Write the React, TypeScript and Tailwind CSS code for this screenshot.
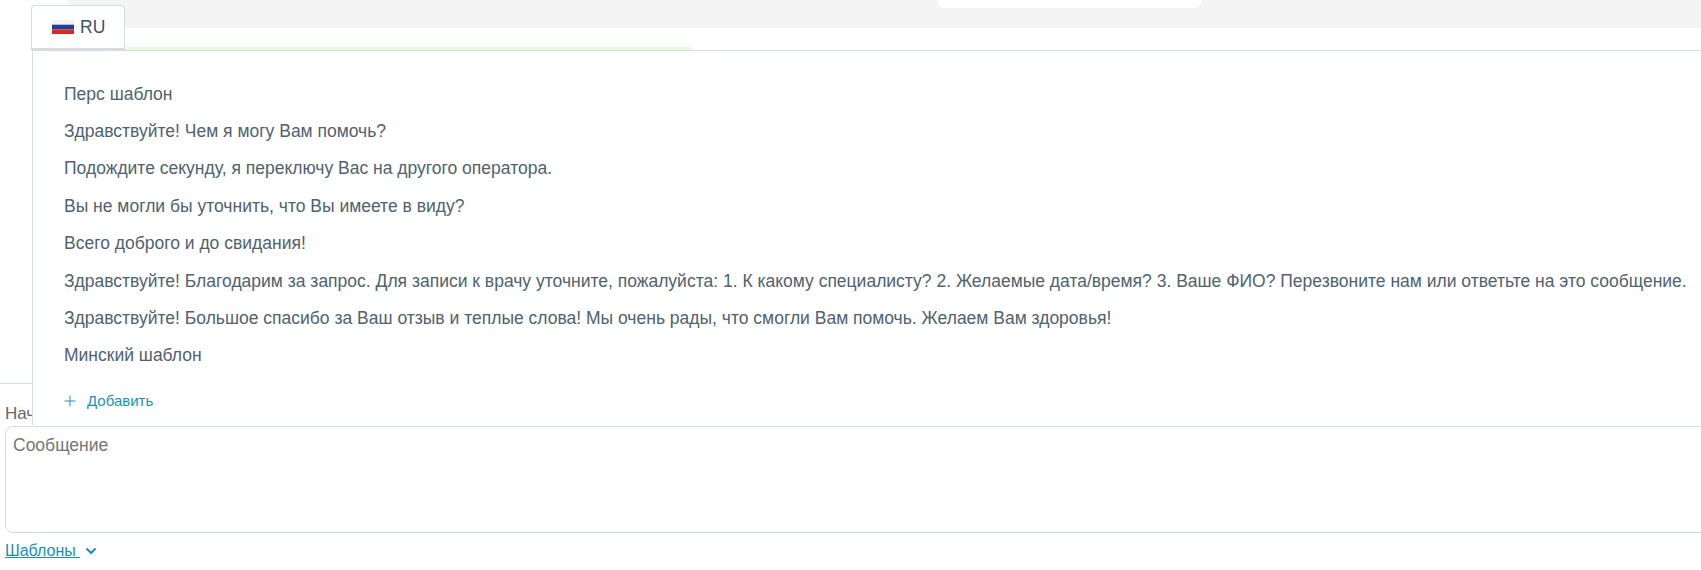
import React from "react";

const rows = [
  "Перс шаблон",
  "Здравствуйте! Чем я могу Вам помочь?",
  "Подождите секунду, я переключу Вас на другого оператора.",
  "Вы не могли бы уточнить, что Вы имеете в виду?",
  "Всего доброго и до свидания!",
  "Здравствуйте! Благодарим за запрос. Для записи к врачу уточните, пожалуйста: 1. К какому специалисту? 2. Желаемые дата/время? 3. Ваше ФИО? Перезвоните нам или ответьте на это сообщение.",
  "Здравствуйте! Большое спасибо за Ваш отзыв и теплые слова! Мы очень рады, что смогли Вам помочь. Желаем Вам здоровья!",
  "Минский шаблон",
];

export default function App() {
  return (
    <div className="relative h-[570px] w-[1701px] overflow-hidden bg-white font-['Liberation_Sans',Arial,sans-serif] text-[17.5px]">
      {/* Page behind the popover */}
      <div className="ml-[68px] flex h-[28px] bg-[#f4f4f4] pl-[869px]">
        <div className="h-[8px] w-[265px] rounded-b-[12px] bg-white" />
      </div>
      <div className="ml-[125px] mt-[19px] h-[3px] w-[567px] rounded-tr-[2px] bg-[#e6f9dc]" />
      <div className="mt-[333px] h-px bg-[#d5dde3]" />
      <div className="ml-[5px] mt-[19px] h-[21px] text-[17px] leading-[21px] text-[#666666]">Начало</div>
      <div className="ml-[5px] mt-[2px] h-[107px] w-[1720px] rounded-[8px] border border-[#d5dde3] px-[7px] py-[7px] leading-[23px] text-[#757575]">
        Сообщение
      </div>
      <div className="ml-[5px] mt-[8px] flex items-center gap-[5px] text-[16px] leading-[20px] text-[#1a8fb3]">
        <span className="whitespace-pre underline">Шаблоны </span>
        <svg width="12" height="8" viewBox="0 0 12 8" fill="none" stroke="#1a8fb3" strokeWidth="2">
          <path d="M1.5 1.5 6 6l4.5-4.5" />
        </svg>
      </div>

      {/* Popover */}
      <div className="absolute left-[32px] top-[50px] h-[375px] w-[1700px] border-l border-t border-[#d5dde3] bg-white pl-[31px] pt-[24.6px]">
        {rows.map((r) => (
          <div key={r} className="h-[37.4px] whitespace-nowrap leading-[37.4px] text-[#4f626e]">
            {r}
          </div>
        ))}
        <div className="mt-[16.4px] flex h-[20px] items-center gap-[11px] text-[15px] text-[#1a94b8]">
          <svg width="12" height="12" viewBox="0 0 12 12" stroke="#1a94b8" strokeWidth="1">
            <path d="M6 0.5v11M0.5 6h11" />
          </svg>
          Добавить
        </div>
      </div>

      {/* Language tab */}
      <div className="absolute left-[31px] top-[5px] flex h-[45px] w-[94px] items-center gap-[6px] rounded-t-[4px] border border-b-2 border-[#d5dde3] bg-white pl-[20px] text-[#3f5260]">
        <svg width="22" height="14" viewBox="0 0 22 14" className="shrink-0">
          <rect width="22" height="4.7" fill="#f4f4f4" />
          <rect y="4.7" width="22" height="4.6" fill="#1f3f9c" />
          <rect y="9.3" width="22" height="4.7" fill="#d52b1e" />
        </svg>
        <span>RU</span>
      </div>
    </div>
  );
}
